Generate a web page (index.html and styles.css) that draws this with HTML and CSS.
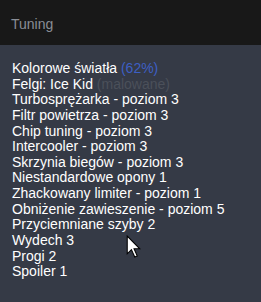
FILE: index.html
```html
<!DOCTYPE html>
<html lang="pl">
<head>
<meta charset="utf-8">
<link rel="stylesheet" href="styles.css">
</head>
<body>
<div class="panel">
  <div class="header">Tuning</div>
  <ul class="list">
    <li>Kolorowe światła <span class="pct">(62%)</span></li>
    <li>Felgi: Ice Kid <span class="muted">(malowane)</span></li>
    <li>Turbosprężarka - poziom 3</li>
    <li>Filtr powietrza - poziom 3</li>
    <li>Chip tuning - poziom 3</li>
    <li>Intercooler - poziom 3</li>
    <li>Skrzynia biegów - poziom 3</li>
    <li>Niestandardowe opony 1</li>
    <li>Zhackowany limiter - poziom 1</li>
    <li>Obniżenie zawieszenie - poziom 5</li>
    <li>Przyciemniane szyby 2</li>
    <li>Wydech 3</li>
    <li>Progi 2</li>
    <li>Spoiler 1</li>
  </ul>
  <svg class="cursor" width="15" height="23" viewBox="0 0 14 22">
    <path d="M1 1 L1 18 L5 14 L8.2 21 L10.6 20 L7.5 13.2 L13 13.2 Z" fill="#fff" stroke="#000" stroke-width="1" stroke-linejoin="miter"/>
  </svg>
</div>
</body>
</html>
```

FILE: styles.css
```css
html, body {
  margin: 0;
  padding: 0;
  background: #353a46;
}
.panel {
  position: relative;
  width: 261px;
  height: 302px;
  overflow: hidden;
  font-family: "Liberation Sans", Arial, sans-serif;
}
.header {
  box-sizing: border-box;
  height: 45px;
  padding: 16px 11px 0;
  background: #181818;
  color: #8a8e96;
  font-size: 14px;
}
.list {
  list-style: none;
  margin: 0;
  padding: 16px 12px 0;
  color: #ffffff;
  font-size: 14px;
  line-height: 15.64px;
}
.pct {
  color: #3d5fc4;
}
.muted {
  color: #4b505a;
}
.cursor {
  position: absolute;
  left: 126px;
  top: 235px;
}
```
